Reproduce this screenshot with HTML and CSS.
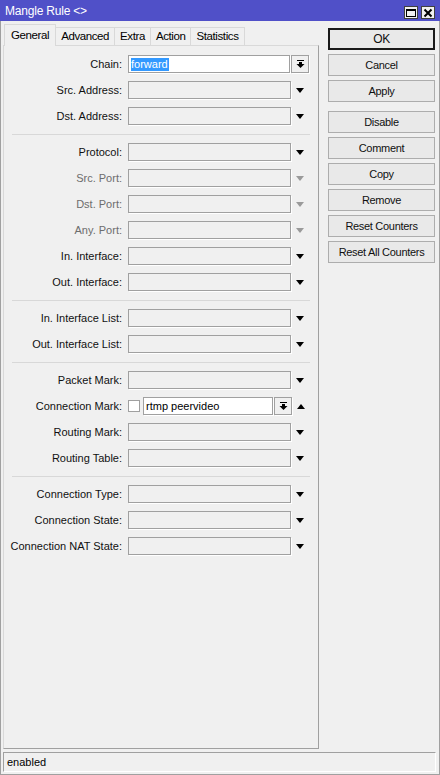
FILE: index.html
```html
<!DOCTYPE html>
<html>
<head>
<meta charset="utf-8">
<link rel="stylesheet" href="styles.css">
</head>
<body>
<div class="window">
  <div class="titlebar">
    <span class="title">Mangle Rule &lt;&gt;</span>
    <div class="tb-buttons">
      <span class="tb-btn"><svg width="12" height="10" viewBox="0 0 12 10"><rect x="1.5" y="1.5" width="9" height="7" fill="none" stroke="#000" stroke-width="1"/><rect x="1" y="1" width="10" height="2" fill="#000"/></svg></span>
      <span class="tb-btn"><svg width="12" height="10" viewBox="0 0 12 10"><path d="M2.5 1.5 L9.5 8.5 M9.5 1.5 L2.5 8.5" stroke="#000" stroke-width="2"/></svg></span>
    </div>
  </div>
  <div class="main">
    <div class="left">
      <div class="tabs">
        <span class="tab active">General</span>
        <span class="tab">Advanced</span>
        <span class="tab">Extra</span>
        <span class="tab">Action</span>
        <span class="tab">Statistics</span>
      </div>
      <div class="panel">
        <div class="row">
          <span class="label">Chain:</span>
          <span class="input white chain"><span class="sel">forward</span></span>
          <span class="dbtn"><svg width="9" height="9" viewBox="0 0 9 9"><rect x="1" y="0" width="7" height="1" fill="#000"/><rect x="3" y="2" width="3" height="2" fill="#000"/><polygon points="0.5,4 8.5,4 4.5,8" fill="#000"/></svg></span>
        </div>
        <div class="row">
          <span class="label">Src. Address:</span>
          <span class="input"></span>
          <span class="arrow"></span>
        </div>
        <div class="row">
          <span class="label">Dst. Address:</span>
          <span class="input"></span>
          <span class="arrow"></span>
        </div>
        <div class="sep"></div>
        <div class="row">
          <span class="label">Protocol:</span>
          <span class="input"></span>
          <span class="arrow"></span>
        </div>
        <div class="row">
          <span class="label dis">Src. Port:</span>
          <span class="input"></span>
          <span class="arrow dis"></span>
        </div>
        <div class="row">
          <span class="label dis">Dst. Port:</span>
          <span class="input"></span>
          <span class="arrow dis"></span>
        </div>
        <div class="row">
          <span class="label dis">Any. Port:</span>
          <span class="input"></span>
          <span class="arrow dis"></span>
        </div>
        <div class="row">
          <span class="label">In. Interface:</span>
          <span class="input"></span>
          <span class="arrow"></span>
        </div>
        <div class="row">
          <span class="label">Out. Interface:</span>
          <span class="input"></span>
          <span class="arrow"></span>
        </div>
        <div class="sep"></div>
        <div class="row">
          <span class="label">In. Interface List:</span>
          <span class="input"></span>
          <span class="arrow"></span>
        </div>
        <div class="row">
          <span class="label">Out. Interface List:</span>
          <span class="input"></span>
          <span class="arrow"></span>
        </div>
        <div class="sep"></div>
        <div class="row">
          <span class="label">Packet Mark:</span>
          <span class="input"></span>
          <span class="arrow"></span>
        </div>
        <div class="row">
          <span class="label">Connection Mark:</span>
          <span class="check"></span>
          <span class="input white cm">rtmp peervideo</span>
          <span class="dbtn cmbtn"><svg width="9" height="9" viewBox="0 0 9 9"><rect x="1" y="0" width="7" height="1" fill="#000"/><rect x="3" y="2" width="3" height="2" fill="#000"/><polygon points="0.5,4 8.5,4 4.5,8" fill="#000"/></svg></span>
          <span class="arrow up"></span>
        </div>
        <div class="row">
          <span class="label">Routing Mark:</span>
          <span class="input"></span>
          <span class="arrow"></span>
        </div>
        <div class="row">
          <span class="label">Routing Table:</span>
          <span class="input"></span>
          <span class="arrow"></span>
        </div>
        <div class="sep"></div>
        <div class="row">
          <span class="label">Connection Type:</span>
          <span class="input"></span>
          <span class="arrow"></span>
        </div>
        <div class="row">
          <span class="label">Connection State:</span>
          <span class="input"></span>
          <span class="arrow"></span>
        </div>
        <div class="row">
          <span class="label">Connection NAT State:</span>
          <span class="input"></span>
          <span class="arrow"></span>
        </div>
      </div>
    </div>
    <div class="right">
      <div class="btn default">OK</div>
      <div class="btn">Cancel</div>
      <div class="btn">Apply</div>
      <div class="btn gap">Disable</div>
      <div class="btn">Comment</div>
      <div class="btn">Copy</div>
      <div class="btn">Remove</div>
      <div class="btn">Reset Counters</div>
      <div class="btn">Reset All Counters</div>
    </div>
  </div>
  <div class="status">enabled</div>
</div>
</body>
</html>
```

FILE: styles.css
```css
* { box-sizing: border-box; }
html, body { margin: 0; padding: 0; background: #f0f0f0; }
body {
  font-family: "Liberation Sans", Arial, sans-serif;
  font-size: 11px;
  color: #000;
}
.window {
  width: 440px;
  height: 775px;
  display: flex;
  flex-direction: column;
  background: #f0f0f0;
  border-left: 1px solid #a0a0a0;
  border-right: 1px solid #a0a0a0;
  border-bottom: 1px solid #a0a0a0;
}
.titlebar {
  height: 21px;
  margin: 0 -1px;
  background: #5050c8;
  display: flex;
  align-items: center;
  justify-content: space-between;
  padding: 0 5px 0 5px;
}
.title { color: #fff; font-size: 12px; letter-spacing: -0.2px; }
.tb-buttons { display: flex; gap: 3px; margin-top: 4px; }
.tb-btn {
  width: 14px;
  height: 13px;
  background: #f0f0f0;
  border: 1px solid #404040;
  display: flex;
  align-items: center;
  justify-content: center;
}
.main {
  flex: 1;
  display: flex;
  padding-left: 2px;
}
.left {
  width: 316px;
  display: flex;
  flex-direction: column;
}
.tabs {
  display: flex;
  height: 22px;
  margin-top: 2px;
  padding-left: 1px;
  align-items: flex-end;
  position: relative;
  z-index: 1;
}
.tab {
  height: 18px;
  padding: 0 5px 0 5px;
  border: 1px solid #d9d9d9;
  border-bottom: none;
  margin-right: -1px;
  background: #f0f0f0;
  line-height: 17px;
  font-size: 11.5px;
  letter-spacing: -0.4px;
}
.tab.active {
  height: 22px;
  padding: 0 6px 0 6px;
  border-color: #d9d9d9;
  margin-bottom: -1px;
  line-height: 20px;
  background: #f0f0f0;
}
.panel {
  flex: 1;
  border: 1px solid #d9d9d9;
  border-right: 1px solid #a0a0a0;
  border-bottom: 1px solid #a0a0a0;
  padding-top: 5px;
}
.row {
  height: 26px;
  display: flex;
  align-items: center;
}
.label {
  width: 118px;
  text-align: right;
  margin-right: 6px;
  white-space: nowrap;
  color: #101010;
}
.label.dis { color: #6d6d6d; }
.input {
  width: 163px;
  height: 18px;
  border: 1px solid #a0a0a0;
  box-shadow: 1px 1px 0 #fff;
  background: #f0f0f0;
  padding-left: 2px;
  line-height: 16px;
  white-space: nowrap;
  overflow: hidden;
}
.input.white { background: #fff; }
.input.chain { width: 162px; }
.sel { background: #3399ff; color: #fff; padding: 0 1px 1px 0; }
.arrow {
  width: 0;
  height: 0;
  margin-left: 5px;
  border-left: 4.5px solid transparent;
  border-right: 4.5px solid transparent;
  border-top: 5px solid #000;
}
.arrow.dis { border-top-color: #9a9a9a; }
.arrow.up {
  border-top: none;
  border-bottom: 5px solid #000;
}
.dbtn {
  width: 18px;
  height: 18px;
  margin-left: 1px;
  border: 1px solid #a0a0a0;
  box-shadow: 1px 1px 0 #fff;
  background: #f0f0f0;
  display: flex;
  align-items: center;
  justify-content: center;
}
.check {
  width: 12px;
  height: 12px;
  border: 1px solid #a0a0a0;
  background: #fff;
  margin-right: 3px;
}
.input.cm { width: 130px; }
.dbtn.cmbtn { margin-left: 1px; }
.sep {
  height: 1px;
  background: #d8d8d8;
  margin: 5px 8px 4px 8px;
}
.right {
  width: 107px;
  margin-left: 9px;
  padding-top: 7px;
  display: flex;
  flex-direction: column;
  gap: 4px;
}
.btn {
  height: 22px;
  border: 1px solid #adadad;
  background: #e9e9e9;
  text-align: center;
  line-height: 20px;
  color: #101010;
  letter-spacing: -0.3px;
}
.btn.default { border: 2px solid #1a1a1a; line-height: 18px; font-size: 12px; }
.btn.gap { margin-top: 5px; }
.status {
  height: 20px;
  margin: 3px 3px 2px 2px;
  border-top: 1px solid #a0a0a0;
  border-left: 1px solid #a0a0a0;
  border-bottom: 1px solid #fff;
  border-right: 1px solid #fff;
  padding-left: 3px;
  line-height: 18px;
}
```
